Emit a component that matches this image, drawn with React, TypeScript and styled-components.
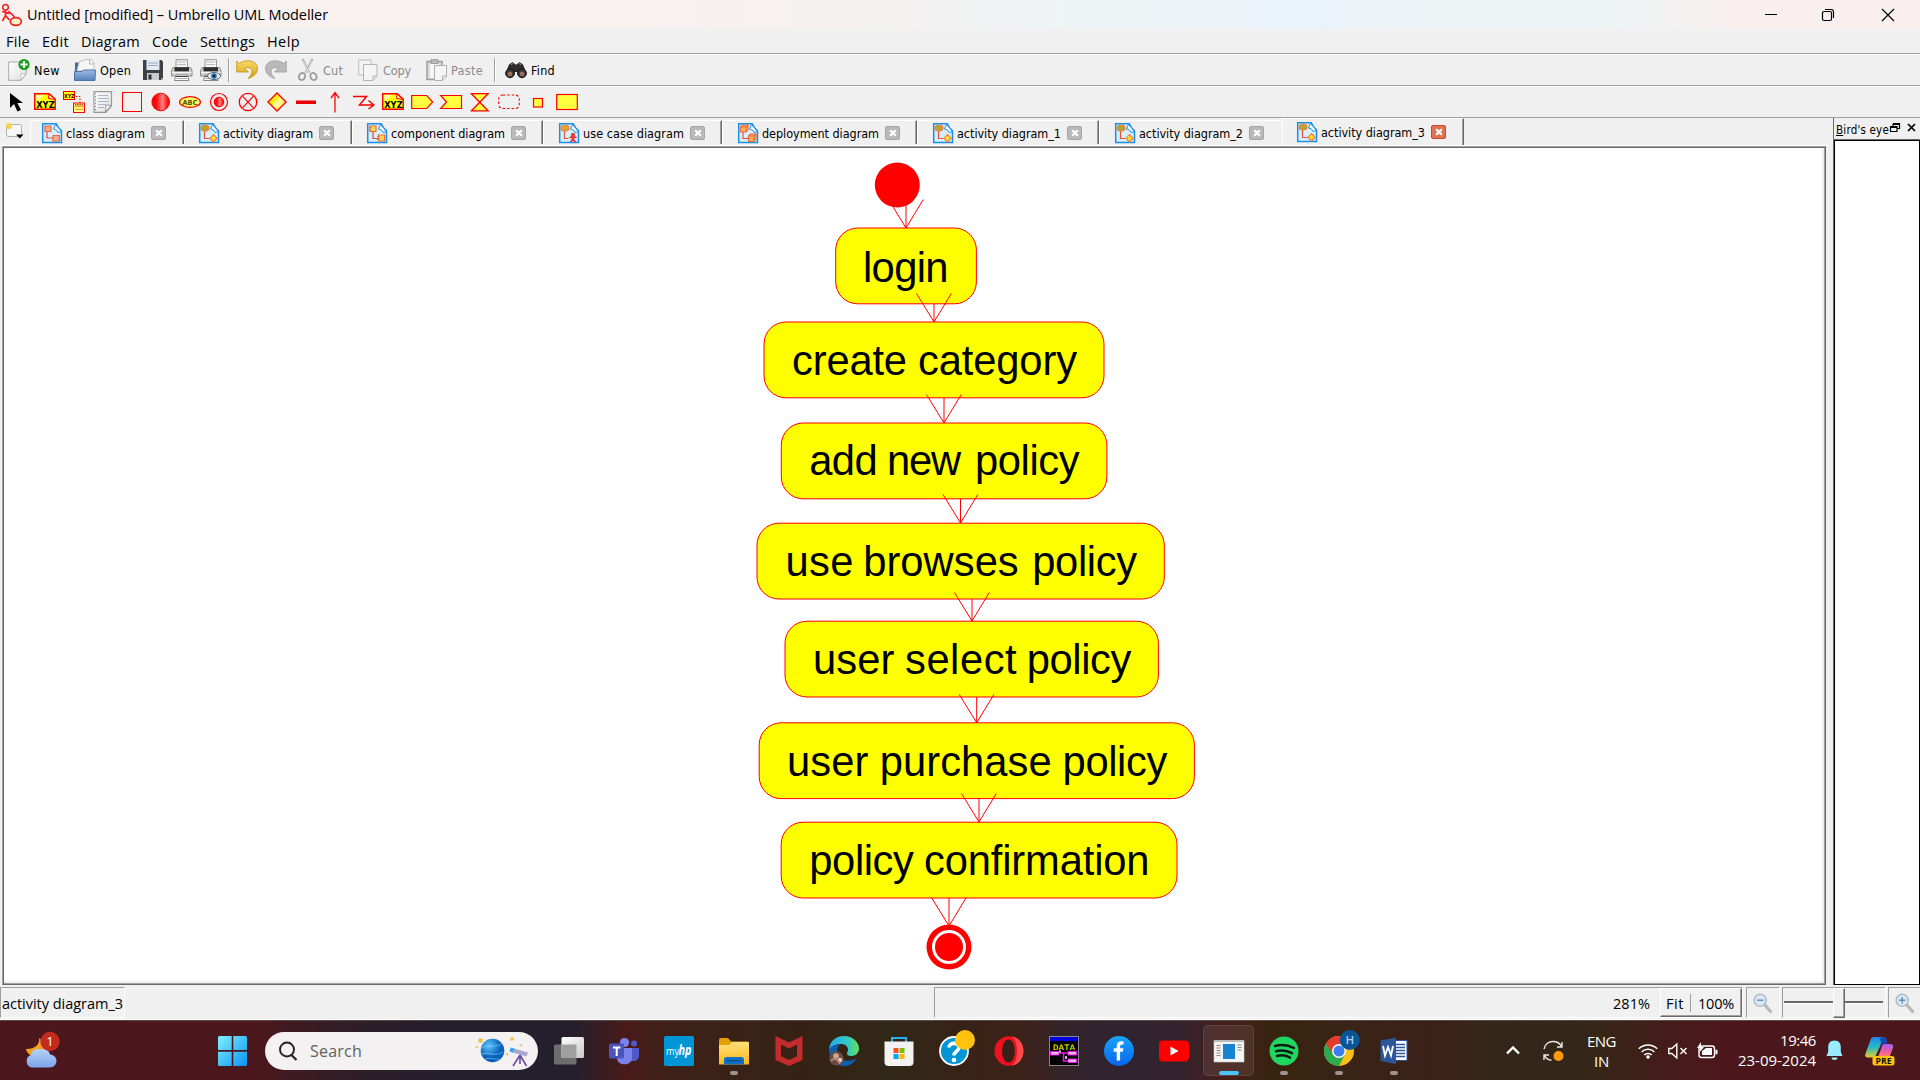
import React, { useLayoutEffect, useRef, useState } from "react";
import styled, { createGlobalStyle, css } from "styled-components";

const ui = `"Open Sans", "Noto Sans", sans-serif`;
const tahoma = `"DejaVu Sans Condensed", "DejaVu Sans", sans-serif`;

const Global = createGlobalStyle`
  * { box-sizing: border-box; }
  body { margin: 0; background: #f0f0f0; overflow: hidden; }
`;

/* ---------- text set to a known measure ---------- */
const Line = styled.span<{ $size: number; $font?: string; $color?: string; $weight?: number; $mnemonic?: boolean }>`
  display: inline-block;
  white-space: pre;
  font-family: ${(p) => p.$font || ui};
  font-size: ${(p) => p.$size}px;
  font-weight: ${(p) => p.$weight || 400};
  color: ${(p) => p.$color || "#000"};
  line-height: 20px;
  ${(p) => p.$mnemonic && css`&::first-letter { text-decoration: underline; }`}
`;
const Measure = styled.span<{ $w: number }>`
  display: block;
  flex: none;
  width: ${(p) => p.$w}px;
  height: 20px;
  white-space: nowrap;
`;
type FitProps = { w: number; size: number; font?: string; color?: string; weight?: number; mnemonic?: boolean; children: string };
function Fit({ w, size, font, color, weight, mnemonic, children }: FitProps) {
  const ref = useRef<HTMLSpanElement>(null);
  const [ls, setLs] = useState(0);
  useLayoutEffect(() => {
    if (ref.current) {
      ref.current.style.letterSpacing = "0px";
      const natural = ref.current.getBoundingClientRect().width;
      const next = (w - natural) / children.length;
      ref.current.style.letterSpacing = `${next}px`;
      setLs(next);
    }
  }, [w, children]);
  return (
    <Measure $w={w}>
      <Line ref={ref} $size={size} $font={font} $color={color} $weight={weight} $mnemonic={mnemonic} style={{ letterSpacing: ls }}>
        {children}
      </Line>
    </Measure>
  );
}

/* ---------- window ---------- */
const Window = styled.div`
  width: 1920px;
  height: 1080px;
  display: flex;
  flex-direction: column;
  background: #f0f0f0;
  overflow: hidden;
`;
const TitleBar = styled.header`
  flex: none;
  height: 29px;
  display: flex;
  align-items: center;
  padding-left: 2px;
  background: linear-gradient(90deg, #f9f0f0 0, #f9f0f0 660px, #f4f1f1 900px, #edf4f5 1100px, #ebf3fb 1300px, #ecf4f7 1400px, #edf4f5 1600px, #f9efef 1740px, #f9efef 100%);
`;
const AppTitle = styled.div`
  margin: 0 auto 0 5px;
  padding-top: 1px;
`;
const Caption = styled.div`
  display: flex;
  gap: 48px;
  padding-right: 26px;
  > svg:first-child { margin-right: -3px; }
`;
const MenuBar = styled.nav`
  flex: none;
  height: 25px;
  display: flex;
  align-items: center;
  border-bottom: 1px solid #a0a0a0;
`;
const MenuItem = styled.div<{ $gap: number }>`
  margin-left: ${(p) => p.$gap}px;
  padding-top: 1px;
`;
const ToolBar = styled.div`
  flex: none;
  height: 32px;
  display: flex;
  align-items: center;
  border-top: 1px solid #fff;
  border-bottom: 1px solid #a0a0a0;
`;
const Tool = styled.div<{ $gap: number }>`
  display: flex;
  align-items: center;
  margin-left: ${(p) => p.$gap}px;
`;
const Label = styled.div<{ $gap: number }>`
  margin-left: ${(p) => p.$gap}px;
  padding-top: 2px;
`;
const ToolSep = styled.div<{ $gap: number }>`
  width: 2px;
  height: 24px;
  margin-left: ${(p) => p.$gap}px;
  background: linear-gradient(90deg, #a0a0a0 50%, #fff 50%);
`;
const Palette = styled(ToolBar)`
  gap: 7px;
  padding-left: 5px;
`;
const Main = styled.main`
  flex: none;
  height: 867px;
  display: flex;
`;
const Left = styled.section`
  width: 1829px;
  display: flex;
  flex-direction: column;
`;
const Tabs = styled.div`
  flex: none;
  height: 28px;
  display: flex;
  align-items: flex-end;
  border-bottom: 1px solid #fff;
`;
const Corner = styled.div`
  width: 30px;
  height: 26px;
  padding: 3px 0 0 4px;
`;
const Tab = styled.div<{ $active?: boolean; $pad: number; $w: number; $noEdge?: boolean }>`
  width: ${(p) => p.$w}px;
  height: ${(p) => (p.$active ? 27 : 24)}px;
  display: flex;
  align-items: center;
  padding-left: ${(p) => p.$pad}px;
  margin-bottom: ${(p) => (p.$active ? 0 : 1)}px;
  padding-bottom: ${(p) => (p.$active ? 1 : 0)}px;
  border-top: 1px solid #fff;
  border-left: 1px solid #fff;
  ${(p) =>
    !p.$noEdge &&
    css`
      border-right: 1px solid #696969;
      box-shadow: inset -1px 0 #a0a0a0;
    `}
`;
const TabText = styled.div`
  margin: 0 6px 0 4px;
  padding-top: 2px;
`;
const CloseBox = styled.div<{ $hot?: boolean }>`
  width: 15px;
  height: 14px;
  margin-top: ${(p) => (p.$hot ? 0 : 1)}px;
  border: 1px solid ${(p) => (p.$hot ? "#d8422a" : "#a5a5a5")};
  border-radius: 2px;
  background: ${(p) => (p.$hot ? "#df7452" : "#b9b9b9")};
  display: flex;
  align-items: center;
  justify-content: center;
`;
const Canvas = styled.div`
  width: 1824px;
  height: 839px;
  margin-left: 2px;
  background: #fff;
  border: 1px solid #a0a0a0;
  border-right-color: #696969;
  border-bottom-color: #696969;
  box-shadow: inset 1px 1px #696969, inset -1px -1px #a0a0a0, inset -3px -3px #f0f0f0;
  > svg { display: block; }
`;
const Dock = styled.aside`
  width: 87px;
  margin-left: 4px;
  display: flex;
  flex-direction: column;
  border-left: 1px solid #696969;
`;
const DockTitle = styled.div`
  flex: none;
  height: 22px;
  display: flex;
  align-items: flex-start;
  padding: 0 0 0 2px;
  border-bottom: 1px solid #696969;
`;
const DockName = styled.div`
  width: 53px;
  margin-right: 1px;
  padding-top: 2px;
`;
const DockView = styled.div`
  flex: 1;
  border: 1px solid #000;
  background: #fff;
`;

/* ---------- status bar ---------- */
const Status = styled.footer`
  flex: none;
  height: 35px;
  display: flex;
  align-items: center;
  padding-top: 1px;
  border-bottom: 1px solid #fff;
`;
const Sunken = styled.div<{ $w: number; $gap?: number }>`
  flex: none;
  width: ${(p) => p.$w}px;
  height: 31px;
  margin-left: ${(p) => p.$gap || 0}px;
  display: flex;
  align-items: center;
  border: 1px solid #a0a0a0;
  border-right-color: #fff;
  border-bottom-color: #fff;
`;
const StatusText = styled.div`
  padding-top: 2px;
`;
const Raised = styled.div`
  width: 83px;
  height: 29px;
  margin-left: auto;
  display: flex;
  align-items: center;
  padding-left: 5px;
  border: 1px solid #fff;
  border-right-color: #696969;
  border-bottom-color: #696969;
  box-shadow: inset -1px -1px #a0a0a0;
`;
const Divider = styled.div`
  width: 1px;
  height: 18px;
  margin: 0 7px 0 6px;
  background: #a0a0a0;
`;
const ZoomValue = styled(StatusText)`
  margin: 0 10px 0 678px;
`;
const Groove = styled.div`
  width: 99px;
  height: 3px;
  margin-left: 1px;
  background: linear-gradient(#696969 67%, #fff 67%);
  display: flex;
  align-items: center;
`;
const Handle = styled.div`
  flex: none;
  width: 12px;
  height: 30px;
  margin-left: 49px;
  background: #f0f0f0;
  border: 1px solid #fff;
  border-right-color: #696969;
  border-bottom-color: #696969;
  box-shadow: inset -1px -1px #a0a0a0;
`;

/* ---------- task bar ---------- */
const TaskBar = styled.div`
  flex: none;
  height: 60px;
  display: flex;
  align-items: center;
  border-top: 1px solid #5b4a48;
  padding-left: 24px;
  background: linear-gradient(90deg, #4b171c 0, #4b171c 260px, #3a1c24 310px, #2c1e29 370px, #231f2d 460px, #251f2d 575px, #4a1a18 625px, #3d2017 670px, #362215 800px, #302717 890px, #3a2116 980px, #3c2119 1020px, #33232b 1070px, #2f2330 1120px, #33232e 1180px, #462019 1225px, #38230f 1270px, #382414 1330px, #3b2017 1430px, #33271a 1510px, #352616 1600px, #431d19 1660px, #4b171c 1720px, #4b171c 100%);
`;
const Spacer = styled.div<{ $w: number }>`
  flex: none;
  width: ${(p) => p.$w}px;
`;
const Search = styled.div`
  flex: none;
  width: 273px;
  height: 38px;
  border-radius: 19px;
  background: #f3f1f2;
  display: flex;
  align-items: center;
  padding-left: 13px;
  > svg:last-child { margin-left: auto; margin-right: 9px; }
  > svg:first-child { margin-right: 12px; }
`;
const Cell = styled.div<{ $active?: boolean }>`
  flex: none;
  position: relative;
  width: 51px;
  height: 51px;
  margin: 0 2px;
  display: flex;
  align-items: center;
  justify-content: center;
  border-radius: 5px;
  ${(p) => p.$active && css`background: rgba(255, 255, 255, 0.08); border: 1px solid rgba(255, 255, 255, 0.09);`}
`;
const Mark = styled.i<{ $active?: boolean }>`
  position: absolute;
  bottom: ${(p) => (p.$active ? 0 : 1)}px;
  left: 50%;
  width: ${(p) => (p.$active ? 20 : 8)}px;
  height: 4px;
  transform: translateX(-50%);
  border-radius: 2px;
  background: ${(p) => (p.$active ? "#4cc2ff" : "#9d9490")};
`;
const Tray = styled.div`
  margin-left: auto;
  display: flex;
  align-items: center;
  height: 100%;
  > svg { flex: none; }
`;
const Stack = styled.div<{ $end?: boolean }>`
  display: flex;
  flex-direction: column;
  align-items: ${(p) => (p.$end ? "flex-end" : "center")};
  margin-top: ${(p) => (p.$end ? -2 : 0)}px;
`;

/* ---------- icons ---------- */
const G = ({ w = 22, h = 22, vb, children }: { w?: number; h?: number; vb?: string; children: React.ReactNode }) => (
  <svg width={w} height={h} viewBox={vb || `0 0 ${w} ${h}`} fill="none" overflow="visible">
    {children}
  </svg>
);
const red = "#ff0000";
const Defs = () => (
  <svg width="0" height="0" style={{ position: "absolute" }}>
    <defs>
      <linearGradient id="redball" x1="0" x2="1"><stop offset="0" stopColor="#f00" /><stop offset=".25" stopColor="#ff0808" /><stop offset=".6" stopColor="#ff8080" /><stop offset=".9" stopColor="#ff1010" /><stop offset="1" stopColor="#f00" /></linearGradient>
      <linearGradient id="yel" x1="0" x2="1" y2="1"><stop offset="0" stopColor="#ff0" /><stop offset=".4" stopColor="#ffee20" /><stop offset=".55" stopColor="#ffffa8" /><stop offset="1" stopColor="#ffe600" /></linearGradient>
      <linearGradient id="paper" x1="0" x2="1" y2="1"><stop offset="0" stopColor="#fff" /><stop offset="1" stopColor="#dedede" /></linearGradient>
      <linearGradient id="folder" x2="0" y2="1"><stop offset="0" stopColor="#9dbbe0" /><stop offset="1" stopColor="#5583bd" /></linearGradient>
      <linearGradient id="win" x1="0" y1="0" x2="1" y2="1"><stop offset="0" stopColor="#7ff0ff" /><stop offset="1" stopColor="#0a93f5" /></linearGradient>
      <linearGradient id="cloud" x2="0" y2="1"><stop offset="0" stopColor="#b6d0f8" /><stop offset="1" stopColor="#7ba5ea" /></linearGradient>
      <linearGradient id="xfold" x2="0" y2="1"><stop offset="0" stopColor="#ffe07a" /><stop offset="1" stopColor="#fbb91b" /></linearGradient>
      <linearGradient id="edge" x1="0" x2="1"><stop offset="0" stopColor="#27a7e6" /><stop offset=".6" stopColor="#30c9c9" /><stop offset="1" stopColor="#63e05a" /></linearGradient>
      <linearGradient id="fb" x2="0" y2="1"><stop offset="0" stopColor="#19a4fb" /><stop offset="1" stopColor="#0866ea" /></linearGradient>
      <linearGradient id="cop" x2="0" y2="1"><stop offset="0" stopColor="#1c86ee" /><stop offset=".5" stopColor="#27b8c4" /><stop offset="1" stopColor="#e6d029" /></linearGradient>
      <linearGradient id="cop2" x2="0" y2="1"><stop offset="0" stopColor="#a55cf5" /><stop offset=".6" stopColor="#ee5ba0" /><stop offset="1" stopColor="#ff8a5c" /></linearGradient>
      <linearGradient id="undo" x2="0" y2="1"><stop offset="0" stopColor="#f7d96a" /><stop offset="1" stopColor="#d9a012" /></linearGradient>
      <linearGradient id="lid" x1="0" x2="1" y2="1"><stop offset="0" stopColor="#fff" /><stop offset="1" stopColor="#c9c9c9" /></linearGradient>
      <radialGradient id="planet" cx=".35" cy=".3"><stop offset="0" stopColor="#5cc4ff" /><stop offset="1" stopColor="#0760b8" /></radialGradient>
    </defs>
  </svg>
);

const Arrow = () => <G><path d="M5 2v15l4-4 3.500 7.500 3.500-1.500-3.700-7H18z" fill="#000" /></G>;
const Xyz = () => (
  <G>
    <path d="M.7 18.300V2.700h14.500l6 5.300v10.300z" fill="#ff0" stroke={red} strokeWidth="1.400" />
    <path d="M15 3l-.5 4.500 6.500 1z" fill="#ff9" stroke={red} />
    <path d="M2 4h8L3 11z" fill="#ffffb0" />
    <text x="2.200" y="17" fontFamily="DejaVu Sans" fontWeight="700" fontSize="8" textLength="18.500" lengthAdjust="spacingAndGlyphs" fill="#000">XYZ</text>
  </G>
);
const Assoc = () => (
  <G>
    <rect x=".5" y=".5" width="11" height="8" fill="#ff0" stroke={red} />
    <text x="1" y="7" fontFamily="DejaVu Sans" fontWeight="700" fontSize="5.500" textLength="10.500" lengthAdjust="spacingAndGlyphs" fill="#300">XYZ</text>
    <path d="M13 5.500h4V12" stroke={red} strokeDasharray="1.500 1.500" />
    <rect x="10.500" y="12" width="11" height="9.500" fill="#ffff8c" stroke={red} />
    <path d="M10.500 15.300h11M12 18.300h8" stroke="#f80" />
    <path d="M12 13.800h8" stroke="#900" strokeDasharray="1.500 .7" />
  </G>
);
const Note = () => (
  <G>
    <path d="M2 .7h17.500v14l-5.500 6.600H2z" fill="url(#paper)" stroke="#999" strokeWidth="1.200" />
    <path d="M6 4.500h10M6 7.500h11M6 10.500h11M6 13.500h8M6 16.500h6" stroke="#a9b8cc" />
    <path d="M3.500 2v18" stroke="#888" strokeDasharray="1.200 2" />
    <path d="M19 14.500l-5-.5-.5 7z" fill="#fff" stroke="#999" />
  </G>
);
const CloseX = () => <G w={10} h={10}><path d="M2.200 2.200l5.600 5.600M7.800 2.200L2.200 7.800" stroke="#fff" strokeWidth="2.200" /></G>;

const palette: React.ReactNode[] = [
  <Arrow />, <Xyz />, <Assoc />, <Note />,
  <G><rect x="1.500" y="1.500" width="19" height="19" stroke={red} fill="#f5f0f0" /></G>,
  <G><circle cx="10.700" cy="11" r="8.800" fill="url(#redball)" stroke={red} /></G>,
  <G><ellipse cx="11" cy="11" rx="10.400" ry="5.400" fill="#ff6" stroke={red} strokeWidth="1.200" /><text x="3.500" y="13.700" fontFamily="DejaVu Sans" fontWeight="700" fontSize="7" textLength="15" lengthAdjust="spacingAndGlyphs" fill="#550">ABC</text></G>,
  <G><circle cx="11" cy="11" r="8.500" stroke={red} strokeWidth="1.200" /><circle cx="11" cy="11" r="4.800" fill="url(#redball)" stroke={red} /></G>,
  <G><circle cx="11" cy="11" r="8.700" stroke={red} strokeWidth="1.300" /><path d="M5.500 5.200l11 11.600M16.500 5.200l-11 11.600" stroke={red} strokeWidth="1.200" /></G>,
  <G><path d="M11 2l9 9-9 9-9-9z" fill="url(#yel)" stroke={red} strokeWidth="1.400" /></G>,
  <G><rect x="1" y="9.500" width="20" height="3.500" fill="#e80000" /></G>,
  <G><path d="M11 21.500V1.500M7 7l4-5.500L15 7" stroke={red} strokeWidth="1.300" /></G>,
  <G><path d="M0 5.500h13.500L6.500 14H20M15.500 9.500L20.800 14l-5.300 4" stroke={red} strokeWidth="1.500" /></G>,
  <Xyz />,
  <G><path d="M.7 4.500h15l6 6.500-6 6.500H.7z" fill="#ffff40" stroke={red} strokeWidth="1.200" /></G>,
  <G><path d="M.7 4.500h20.800v13H.7L6.500 11z" fill="#ffff40" stroke={red} strokeWidth="1.200" /></G>,
  <G><path d="M2.500 2.700h17L11 11z" fill="#ff4" /><path d="M11 11l8.500 8.800h-17z" fill="#ff4" /><path d="M1.500 2.700h18.500M1.500 19.800h18.500M2.500 2.700L19 19.800M19 2.700L2.500 19.800" stroke={red} strokeWidth="1.300" /></G>,
  <G><rect x=".7" y="4" width="20.600" height="13.500" rx="4" stroke={red} strokeWidth="1.100" strokeDasharray="2.500 2" /></G>,
  <G><rect x="6.500" y="7.500" width="9" height="8.500" fill="#ffff40" stroke={red} strokeWidth="1.200" /></G>,
  <G><rect x=".7" y="3.500" width="20.600" height="15" fill="#ffff40" stroke={red} strokeWidth="1.200" /></G>,
];

const NewIcon = () => (
  <G>
    <path d="M.7 3h17.500v12l-5 6.300H.7z" fill="url(#paper)" stroke="#aaa" /><path d="M18 15l-5-.3-.3 6.500z" fill="#fff" stroke="#aaa" strokeWidth=".7" />
    <circle cx="16" cy="5.500" r="5.600" fill="#16a016" /><path d="M16 2v7M12.500 5.500h7" stroke="#fff" strokeWidth="2.200" />
  </G>
);
const OpenIcon = () => (
  <G>
    <path d="M1 3.500h6l1.500 2H19V21H1z" fill="#466c9f" /><path d="M3 11l2-8 7-2.500h5L20 4v8H3z" fill="#f6f6f6" stroke="#aaa" strokeWidth=".7" /><path d="M15.500 1v4H20" stroke="#aaa" strokeWidth=".8" />
    <path d="M.5 12.500H8l1.500-1.500h12l-.5 10.500H.5z" fill="url(#folder)" stroke="#4a75ab" />
  </G>
);
const SaveIcon = () => (
  <G w={20}>
    <path d="M0 1h18.500L20 2.500V21H0z" fill="#3d4045" /><path d="M3.500 1h13v10h-13z" fill="#e2ebf5" /><path d="M5 4h10M5 6.500h10" stroke="#9ab" /><path d="M4 14h12v7H4z" fill="#c8ccd0" /><path d="M5.500 15.500h3v5h-3z" fill="#333" /><path d="M18 20h2" stroke="#fff" />
  </G>
);
const PrintBase = () => (
  <>
    <path d="M5 .7h11.500v8H5z" fill="#f5f5f5" stroke="#999" /><path d="M6.500 3h8.500M6.500 5.500h8.500" stroke="#bbb" />
    <path d="M2 8.500h17.500l1.500 3v5.500H.5v-5.500z" fill="#cfcfcf" stroke="#8a8a8a" /><path d="M3.500 8.300h14.500v4H3.500z" fill="#2d2d2d" /><path d="M1 13.500h19.500" stroke="#f4f4f4" />
    <path d="M5 16h11.500l1.500 5.500H3.500z" fill="#fff" stroke="#888" /><path d="M5 17.500h11.500" stroke="#444" /><path d="M5.500 19.500h10.500" stroke="#aaa" />
  </>
);
const UndoIcon = ({ gray }: { gray?: boolean }) => (
  <G w={22} h={20}>
    <g transform={gray ? "translate(22 0) scale(-1 1)" : undefined}>
      <path d="M.7 1l2.500 2.500C9-1 20.500-.5 21.500 8c.3 5-3.500 8.700-9.500 10.500 4-4 5-8 2.500-10-1.700-1.300-4-1-5.500 0L12.500 12H.7z" fill={gray ? "#b9b9b9" : "url(#undo)"} stroke={gray ? "#a0a0a0" : "#c59010"} strokeWidth=".8" />
    </g>
  </G>
);
const CutIcon = () => (
  <G w={20}>
    <path d="M4.500 0l7 14M14.500 0l-7 14" stroke="#b5b5b5" strokeWidth="2.400" /><path d="M5 2l6 12M14 2L8 14" stroke="#e8e8e8" strokeWidth=".8" />
    <ellipse cx="4" cy="17.500" rx="3" ry="3.600" stroke="#9a9a9a" strokeWidth="1.800" transform="rotate(25 4 17.500)" /><ellipse cx="15.500" cy="17.500" rx="3" ry="3.600" stroke="#9a9a9a" strokeWidth="1.800" transform="rotate(-25 15.500 17.500)" />
  </G>
);
const CopyIcon = () => (
  <G w={20}><path d="M.7 1h12.500v15H.7z" fill="#f3f3f3" stroke="#bdbdbd" /><path d="M5.500 5.500H19V17l-4 4.500H5.500z" fill="#f5f5f5" stroke="#b5b5b5" /><path d="M19 17h-4v4.500" stroke="#b5b5b5" /></G>
);
const PasteIcon = () => (
  <G w={21}><path d="M1 2.500h15v18H1z" fill="#dcdcdc" stroke="#9c9c9c" strokeWidth="1.500" /><path d="M5 .7h7v4H5z" fill="#bbb" stroke="#999" /><path d="M4 5h9v14H4z" fill="#f5f5f5" /><path d="M8.500 6.500H20.500V17l-4 4.500h-8z" fill="#f5f5f5" stroke="#b0b0b0" /><path d="M20.500 17h-4v4.500" stroke="#b0b0b0" /></G>
);
const FindIcon = () => (
  <G w={22} h={18}>
    <path d="M4 3.500L7.500 1l3 2.500h1L14.500 1 18 3.500l3.500 8.500-9 2v-3h-3v3L.5 12z" fill="#2e2c2c" />
    <circle cx="5" cy="12.300" r="4.400" fill="#3c3a3a" stroke="#111" /><circle cx="17" cy="12.300" r="4.400" fill="#3c3a3a" stroke="#111" /><circle cx="5" cy="13" r="2.200" fill="#a4705a" /><circle cx="17" cy="13" r="2.200" fill="#a4705a" /><path d="M6 3.500l2-1M14 2.500l2 1" stroke="#999" />
  </G>
);

const DocBase = () => <path d="M.7.700h13.500l2.300 4 3 3v11.800H.7z" fill="#d5effc" stroke="#1b8fe8" strokeWidth="1.500" />;
const Bite = () => <path d="M13.500 1.500l-2 4.500 3 1 1.500 2.500 3.500-1z" fill="#fff" stroke="#1b8fe8" />;
function DocIcon({ kind }: { kind: string }) {
  const o = "#ee6a3c";
  return (
    <G w={20} h={20}>
      <DocBase />
      <Bite />
      {kind === "class" && <g fill="#f7ab8e" stroke={o} strokeWidth="1.200"><path d="M3 3h6v5.500H3z" /><path d="M11 12.500h6.500V18H11z" /><path d="M5 8.500V15h6" fill="none" stroke="#e4483c" /></g>}
      {kind === "activity" && <g stroke="#e8503c" strokeWidth="1.200"><path d="M5.500 8v7.500h5" /><ellipse cx="6" cy="5" rx="4" ry="3" fill="#b5a63a" stroke="#f08030" /><path d="M14.500 11.500l3.500 3.700-3.500 3.800-3.500-3.800z" fill="#ffe13a" stroke="#f0803a" /></g>}
      {kind === "component" && <g stroke={o} strokeWidth="1.200" fill="#ffd95c"><path d="M3 3h6v5.500H3z" /><path d="M11.500 12h6v6h-6z" /><path d="M6 8.500v7h5" fill="none" stroke="#e4483c" /><path d="M1.800 4.500h2.500M1.800 7h2.500M10 13.500h2.500M10 16.500h2.500" /></g>}
      {kind === "usecase" && <g stroke="#e8503c" strokeWidth="1.200"><path d="M5.500 8v7.500h4" /><ellipse cx="6" cy="5" rx="4" ry="3" fill="#e4a33a" stroke="#f08030" /><circle cx="14" cy="12" r="1.700" fill="#e8302c" /><path d="M14 13v3M10.500 14.300h7M14 16l-2.500 3M14 16l2.500 3" stroke="#e8302c" strokeWidth="1.700" /></g>}
      {kind === "deploy" && <g stroke={o} strokeWidth="1.100" fill="#ffb35c"><path d="M2.500 4l2-2H10v5l-2 2H2.500zM2.500 4H8v5M8 4l2-2" /><path d="M10.500 13l2-2H18v5l-2 2.500h-5.500zM10.500 13H16v5.500M16 13l2-2" /><path d="M5 9v6.500h5.500" fill="none" stroke="#e4483c" /></g>}
    </G>
  );
}

const Magnifier = ({ plus }: { plus?: boolean }) => (
  <G w={19} h={20}>
    <path d="M11.500 11.500l6 7" stroke="#b9b9b9" strokeWidth="3.400" strokeLinecap="round" />
    <circle cx="7.200" cy="7.200" r="6" fill="#dbe8f5" stroke="#b0bcc8" strokeWidth="1.600" />
    <path d="M4 7.200h6.400" stroke="#5d8ab8" strokeWidth="1.400" />
    {plus && <path d="M7.200 4v6.400" stroke="#5d8ab8" strokeWidth="1.400" />}
  </G>
);

/* ---------- diagram ---------- */
type Word = [string, number, number];
const nodes: { x: number; y: number; w: number; base: number; words: Word[] }[] = [
  { x: 835.7, y: 228, w: 140.700, base: 282, words: [["login", 863, 85.5]] },
  { x: 764, y: 322, w: 340, base: 374.800, words: [["create", 792, 115], ["category", 918, 159]] },
  { x: 781.3, y: 423, w: 325.600, base: 475.400, words: [["add", 809.2, 68.500], ["new", 887, 74.200], ["policy", 975, 104.600]] },
  { x: 757, y: 523.2, w: 407.3, base: 575.5, words: [["use", 785.5, 68], ["browses", 863.2, 155.500], ["policy", 1032.3, 104.700]] },
  { x: 785, y: 621.200, w: 373.4, base: 673.8, words: [["user", 813, 81.300], ["select", 905, 111.600], ["policy", 1026.8, 104.500]] },
  { x: 759.2, y: 722.8, w: 435.2, base: 775.5, words: [["user", 787, 81.500], ["purchase", 879.8, 171.800], ["policy", 1062.6, 104.700]] },
  { x: 781.2, y: 822.2, w: 395.8, base: 874.5, words: [["policy", 809.3, 104.600], ["confirmation", 924, 225.500]] },
];
const arrows = [
  [906, 205, 228], [934, 304, 322], [944, 398, 423], [960.5, 499, 523], [972, 599, 621], [976.7, 697, 722.8], [979, 798.6, 822], [949, 898, 926],
];
const Diagram = () => (
  <svg width="1819" height="833" viewBox="3 147 1819 833">
    {arrows.slice(0, 1).map(([x, , t]) => <path key="a" d={`M${x - 17.5} ${t - 28.5}L${x} ${t}`} stroke={red} fill="none" />)}
    {nodes.map((n) => (
      <g key={n.base}>
        <rect x={n.x} y={n.y} width={n.w} height={75.800} rx="22" fill="#ffff00" stroke={red} />
        <g fontFamily="'Liberation Sans', Arial, sans-serif" fontSize="41.700" fill="#000">
          {n.words.map(([t, x, w], i) => <text key={i} x={x} y={n.base} textLength={w}>{t}</text>)}
        </g>
      </g>
    ))}
    <circle cx="897.300" cy="185" r="22.500" fill={red} />
    {arrows.map(([x, s, t], i) => (
      <path key={t} d={`M${x} ${s}V${t}${i ? `M${x - 17.5} ${t - 28.5}` : `M${x} ${t}`}L${x} ${t}L${x + 17.3} ${t - 28.5}`} stroke={red} fill="none" />
    ))}
    <circle cx="949" cy="947" r="22.500" fill={red} />
    <circle cx="949" cy="947" r="15.500" fill={red} stroke="#fff" strokeWidth="3" />
  </svg>
);

/* ---------- task bar icons ---------- */
const I = ({ children }: { children: React.ReactNode }) => <G w={30} h={30}>{children}</G>;
const taskIcons: { mark?: boolean; active?: boolean; icon: React.ReactNode }[] = [
  { icon: <I><rect x="0" y="8.500" width="22.500" height="20" rx="1.500" fill="#6d6d6d" /><rect x="7.500" y="1" width="22.500" height="21" rx="1.500" fill="url(#lid)" /><path d="M7.500 8.500h15V22h-15z" fill="#a0a0a0" /></I> },
  { icon: <I><circle cx="15.500" cy="6.500" r="4.600" fill="#7b83eb" /><circle cx="25" cy="7.500" r="3" fill="#5059c9" /><path d="M20 12h10v8c0 3-2.500 5-5 5h-4z" fill="#5059c9" /><path d="M8 12h15v10c0 4-3.500 6.300-7.500 6.300S8 26 8 22z" fill="#7b83eb" /><rect x="0" y="7.500" width="15" height="15" rx="1.500" fill="#4b53bc" /><path d="M4 11.500h7.500M7.700 11.500V20" stroke="#fff" strokeWidth="2" /></I> },
  { icon: <I><rect width="30" height="30" rx="1.500" fill="#0096d6" /><text x="2" y="18.500" fontFamily="Open Sans" fontSize="10.500" fill="#fff" textLength="13" lengthAdjust="spacingAndGlyphs">my</text><text x="14.500" y="19" fontFamily="Open Sans" fontStyle="italic" fontWeight="700" fontSize="14" textLength="13" lengthAdjust="spacingAndGlyphs" fill="#fff">hp</text></I> },
  { mark: true, icon: <I><path d="M0 4a2 2 0 012-2h7l3 3.500H28a2 2 0 012 2V28H0z" fill="#e0a000" /><path d="M0 9h10l3-3h17v22.500H0z" fill="url(#xfold)" /><path d="M5 28.500v-5a2.500 2.500 0 012.500-2.500h15a2.500 2.500 0 012.500 2.500v5z" fill="#1070c8" /><path d="M8 24.700h14" stroke="#0a4a90" strokeWidth="1.300" /></I> },
  { icon: <I><path d="M1.500 0L15 6.500 28.500 0v24L15 30 1.500 24zM7 8.500v11.800l8 3.700 8-3.700V8.500l-8 4z" fill="#c32b2c" fillRule="evenodd" /></I> },
  { icon: <I><path d="M0 14C0 6 6.500 0 15 0s15 6 15 12.500c0 5-4 7.500-8 7.500-3 0-4-1-4-2.500 0-1 1-2 1-4 0-3-2.500-5.500-7-5.500-6 0-10.500 3-12 6z" fill="url(#edge)" /><path d="M0 14c1.500-4 7-5.500 10.500-5.500-4 4-3 11.500 2 14.500 5 3 11 2 15-1-3 6-7.500 8-12.500 8C6.500 30 0 23.500 0 14z" fill="#0c5eb0" /><circle cx="7.500" cy="22.500" r="7.200" fill="#6b4a42" /><circle cx="7" cy="20" r="2.800" fill="#d6a78e" /><circle cx="11" cy="24" r="2.200" fill="#e2cfc6" /><path d="M2 25c3-4 7-2 9 3" stroke="#b98a76" strokeWidth="1.800" /></I> },
  { icon: <I><path d="M8 7V2h14v5" stroke="#27aef0" strokeWidth="2" /><path d="M.5 5.500h29V26a4 4 0 01-4 4h-21a4 4 0 01-4-4z" fill="#f2f2f2" /><path d="M9.500 12h5v5h-5z" fill="#f25022" /><path d="M15.500 12h5v5h-5z" fill="#7fba00" /><path d="M9.500 18h5v5h-5z" fill="#00a4ef" /><path d="M15.500 18h5v5h-5z" fill="#ffb900" /></I> },
  { icon: <I><circle cx="15" cy="15" r="14" fill="#0096d6" stroke="#fff" strokeWidth="1.800" /><path d="M10 11.500C10 6 20 6 20 11.500c0 3.500-5 4-5 8" stroke="#fff" strokeWidth="3.600" /><circle cx="15" cy="24" r="2.300" fill="#fff" /><circle cx="26" cy="4" r="10" fill="#ffc20e" /></I> },
  { icon: <I><ellipse cx="15" cy="15" rx="14.500" ry="14.700" fill="#f0101f" /><path d="M17 .5c7 0 12.500 6.500 12.500 14.500S24 29.500 17 29.500c4-1 6-7 6-14.500S21 1.500 17 .5z" fill="#ff4a4a" /><ellipse cx="14.500" cy="15" rx="6.500" ry="11.500" fill="#3a2118" /></I> },
  { icon: <I><rect x=".5" y=".5" width="29" height="29" fill="#000" stroke="#888" /><rect x="1" y="1" width="27" height="4" fill="#0000e8" /><text x="4" y="13.500" fontFamily="DejaVu Sans Mono" fontSize="7.500" fill="#ff0" textLength="22" lengthAdjust="spacingAndGlyphs">DATA</text><path d="M10 17h9M14.500 17v8H19" stroke="#e020e0" strokeWidth="1.500" /><g fill="#ccc" stroke="#f0f"><path d="M1.500 15.500H10V19H1.500zM19 15.500h8.500V19H19zM19 23h8.500v3.500H19z" /></g><path d="M11 14.500v2M17 20v3" stroke="#fff" strokeWidth="1.500" /></I> },
  { icon: <I><circle cx="15" cy="15" r="15" fill="url(#fb)" /><path d="M12.700 24.500v-8.700h-3v-3.600h3V10c0-3.300 1.800-4.800 4.500-4.800 1.200 0 2.300.2 2.300.2v3h-1.500c-1.400 0-1.900.8-1.900 1.900v1.900h3.300l-.6 3.600h-2.700v8.700z" fill="#fff" /></I> },
  { icon: <I><rect y="4.500" width="30" height="21" rx="4" fill="#f00" /><path d="M11.500 10.500v9l8-4.500z" fill="#fff" /></I> },
  { active: true, mark: true, icon: <I><path d="M0 4.500h30v21.500H0z" fill="#f4f4f4" stroke="#ccc" strokeWidth=".6" /><path d="M0 4.500h30V6H0z" fill="#bbb" /><rect x="9" y="8" width="12" height="15" fill="#1683d0" /><path d="M2.500 9.500h4M2.500 12h4M2.500 14.500h4M2.500 17h4M2.500 19.500h4M23.500 9h4M23.500 11.500h4M23.500 14h4" stroke="#888" /></I> },
  { mark: true, icon: <I><circle cx="15" cy="15" r="14.500" fill="#1ed760" /><path d="M6 10c6-1.800 13-1.200 19 2M7 15.300c5.500-1.500 11-.9 16 1.900M8 20c4.500-1.200 9-.7 13 1.600" stroke="#0c1a10" strokeWidth="2.500" strokeLinecap="round" /></I> },
  { mark: true, icon: <I><circle cx="15" cy="15" r="15" fill="#fbc116" /><path d="M15 15L2 7.500A15 15 0 0128 7.500L15 8z" fill="#e33b2e" /><path d="M2 7.500A15 15 0 0015 30l6-11.500L15 15z" fill="#2da94f" /><path d="M2 7.500L9 18l6-10h13A15 15 0 002 7.500z" fill="#e33b2e" /><circle cx="15" cy="15" r="7" fill="#fff" /><circle cx="15" cy="15" r="5.500" fill="#3b7ded" /><circle cx="25.800" cy="4" r="10" fill="#0b5596" /><text x="21.500" y="8.200" fontFamily="Open Sans" fontSize="11.500" fontWeight="600" fill="#a8d0f5">H</text></I> },
  { mark: true, icon: <I><rect x="12" y="4.500" width="16" height="20" fill="#fff" stroke="#2b579a" /><path d="M17 8.500h9M17 11.500h9M17 14.500h9M17 17.500h9M17 20.500h9" stroke="#2b579a" strokeWidth="1.400" /><path d="M1.500 4.500L17 1.500v26.500L1.500 25z" fill="#2b579a" /><path d="M4 10l2 9.500L9 11l3 8.500L14 10" stroke="#fff" strokeWidth="1.900" /></I> },
];

const tabs = [
  { k: "class", t: "class diagram", pad: 11, tw: 79, w: 154 },
  { k: "activity", t: "activity diagram", pad: 14, tw: 90, w: 168 },
  { k: "component", t: "component diagram", pad: 14, tw: 114, w: 191 },
  { k: "usecase", t: "use case diagram", pad: 15, tw: 101, w: 179 },
  { k: "deploy", t: "deployment diagram", pad: 15, tw: 117, w: 195 },
  { k: "activity", t: "activity diagram_1", pad: 15, tw: 104, w: 182 },
  { k: "activity", t: "activity diagram_2", pad: 15, tw: 104, w: 183 },
  { k: "activity", t: "activity diagram_3", pad: 14, tw: 104, w: 182 },
];
const menus: [string, number, number][] = [["File", 6, 24], ["Edit", 12, 27], ["Diagram", 12, 59], ["Code", 12, 36], ["Settings", 12, 55], ["Help", 12, 33]];

export default function App() {
  return (
    <Window>
      <Global />
      <Defs />
      <TitleBar>
        <G w={20} h={24}>
          <path d="M3.500 7v5.500M0 8.500l8 2M3.500 12.500L.5 18M3.500 12.500l4 4.500M6.500 8l6 6" stroke="#f12222" strokeWidth="1.700" />
          <circle cx="3.500" cy="4.200" r="2.800" stroke="#f12222" strokeWidth="1.500" />
          <ellipse cx="13.800" cy="18.500" rx="5.500" ry="3.800" fill="#fdf3c4" stroke="#f12222" strokeWidth="1.700" />
        </G>
        <AppTitle><Fit w={301} size={14.5}>Untitled [modified] – Umbrello UML Modeller</Fit></AppTitle>
        <Caption>
          <G w={12} h={12}><path d="M0 5.500h12" stroke="#000" /></G>
          <G w={12} h={12}><rect x=".5" y="2.500" width="9" height="9" rx="1.500" stroke="#000" strokeWidth="1.200" /><path d="M3 .5h6a2.500 2.500 0 012.500 2.500v6" stroke="#000" strokeWidth="1.200" /></G>
          <G w={12} h={12}><path d="M0 0l12 12M12 0L0 12" stroke="#000" strokeWidth="1.200" /></G>
        </Caption>
      </TitleBar>
      <MenuBar>
        {menus.map(([t, g, w]) => <MenuItem key={t} $gap={g}><Fit w={w} size={14.5}>{t}</Fit></MenuItem>)}
      </MenuBar>
      <ToolBar>
        <Tool $gap={8}><NewIcon /><Label $gap={4}><Fit w={26} size={12.5} font={tahoma}>New</Fit></Label></Tool>
        <Tool $gap={14}><OpenIcon /><Label $gap={4}><Fit w={31} size={12.5} font={tahoma}>Open</Fit></Label></Tool>
        <Tool $gap={12}><SaveIcon /></Tool>
        <Tool $gap={8}><G w={21}><PrintBase /></G></Tool>
        <Tool $gap={8}><G w={21}><PrintBase /><ellipse cx="14" cy="17" rx="6.500" ry="3.500" fill="#e6eef5" stroke="#567" /><circle cx="14" cy="17" r="2.800" fill="#2a6ea8" /><circle cx="14" cy="17" r="1.200" fill="#012" /></G></Tool>
        <ToolSep $gap={7} />
        <Tool $gap={6}><UndoIcon /></Tool>
        <Tool $gap={7}><UndoIcon gray /></Tool>
        <Tool $gap={11}><CutIcon /><Label $gap={5}><Fit w={20} size={12.5} font={tahoma} color="#8a8a8a">Cut</Fit></Label></Tool>
        <Tool $gap={15}><CopyIcon /><Label $gap={5}><Fit w={28} size={12.5} font={tahoma} color="#8a8a8a">Copy</Fit></Label></Tool>
        <Tool $gap={15}><PasteIcon /><Label $gap={4}><Fit w={32} size={12.5} font={tahoma} color="#8a8a8a">Paste</Fit></Label></Tool>
        <ToolSep $gap={11} />
        <Tool $gap={9}><FindIcon /><Label $gap={4}><Fit w={24} size={12.5} font={tahoma}>Find</Fit></Label></Tool>
      </ToolBar>
      <Palette>{palette.map((p, i) => <React.Fragment key={i}>{p}</React.Fragment>)}</Palette>
      <Main>
        <Left>
          <Tabs>
            <Corner>
              <G w={20} h={20}><rect x="2.500" y="2.500" width="15" height="12" rx="2" fill="#f7f7f7" stroke="#b0b0b0" /><circle cx="5" cy="4" r="3" fill="#f6d050" /><path d="M12 12.500h7.500l-3.700 4z" fill="#000" /></G>
            </Corner>
            {tabs.map((t, i) => (
              <Tab key={t.t} $pad={t.pad} $w={t.w} $active={i === 7} $noEdge={i === 6}>
                <DocIcon kind={t.k} />
                <TabText><Fit w={t.tw} size={12.5} font={tahoma}>{t.t}</Fit></TabText>
                <CloseBox $hot={i === 7}><CloseX /></CloseBox>
              </Tab>
            ))}
          </Tabs>
          <Canvas><Diagram /></Canvas>
        </Left>
        <Dock>
          <DockTitle>
            <DockName><Fit w={53} size={11.5} font={tahoma} mnemonic>Bird's eye</Fit></DockName>
            <G w={10} h={20}><path d="M3 5.500h6.500v5H7M3 6.500h6.500M3 6v2" stroke="#000" strokeWidth="1.200" /><path d="M.5 8.500h6.500v5H.5zM.5 9.500H7" stroke="#000" strokeWidth="1.200" /></G>
            <Spacer $w={7} />
            <G w={9} h={20}><path d="M1 6l7 7M8 6l-7 7" stroke="#000" strokeWidth="1.700" /></G>
          </DockTitle>
          <DockView />
        </Dock>
      </Main>
      <Status>
        <Sunken $w={125}><Spacer $w={1} /><StatusText><Fit w={121} size={14.5}>activity diagram_3</Fit></StatusText></Sunken>
        <Sunken $w={809} $gap={809}>
          <ZoomValue><Fit w={37} size={14.5}>281%</Fit></ZoomValue>
          <Raised><StatusText><Fit w={18} size={14.5}>Fit</Fit></StatusText><Divider /><StatusText><Fit w={36} size={14.5}>100%</Fit></StatusText></Raised>
        </Sunken>
        <Sunken $w={34} $gap={3}><Spacer $w={6} /><Magnifier /></Sunken>
        <Sunken $w={104} $gap={2}><Groove><Handle /></Groove></Sunken>
        <Sunken $w={34} $gap={2}><Spacer $w={6} /><Magnifier plus /></Sunken>
      </Status>
      <TaskBar>
        <G w={36} h={36}>
          <path d="M15 5c1 6-3 11-13 11 1 6 8 9 14 5l8-8z" fill="#f3a11f" />
          <path d="M8 34.500a6.500 6.500 0 01-1-12.500C8 17 12 15 16 16.500c4-1.500 9 0 10 5 4.500.5 6.500 3.500 6.500 6.500s-2.500 6.500-7 6.500z" fill="url(#cloud)" />
          <circle cx="26" cy="8.500" r="9.700" fill="#c42b1c" /><text x="22.200" y="13.300" fontFamily="Open Sans" fontSize="13" fill="#fff">1</text>
        </G>
        <Spacer $w={158} />
        <G w={29} h={30}><path d="M0 1.500A1.500 1.500 0 011.500 0H13.700V14H0zM15.300 0h12.200A1.500 1.500 0 0129 1.500V14H15.300zM0 15.700h13.700V30H1.500A1.500 1.500 0 010 28.500zM15.300 15.700H29v12.800a1.500 1.500 0 01-1.500 1.500H15.300z" fill="url(#win)" /></G>
        <Spacer $w={18} />
        <Search>
          <G w={20} h={20}><circle cx="9" cy="8.500" r="7" stroke="#222" strokeWidth="1.900" /><path d="M13.500 14l5 5" stroke="#222" strokeWidth="2.200" /></G>
          <Fit w={52} size={16} color="#606060">Search</Fit>
          <G w={54} h={30}>
            <circle cx="17.500" cy="14.500" r="11.800" fill="url(#planet)" />
            <path d="M6.500 12c6-4 14 1 21-5M7 18c7-2 13 3 21-2M10 23c6-2 9 1 14 0" stroke="#8fd2ff" strokeWidth="1" opacity=".6" />
            <g fill="#f0c040"><path d="M4 2l4 1-1 4-4-1zM35 2l3-1 1 3-3 1zM0 11l3-1v3zM44 9l3-1v3zM30 18l3-1v3z" /></g>
            <path d="M37 12l16 4.500-1.500 4L36 16z" fill="#a9a6cf" /><path d="M35.500 11.500l4 1-1.500 4-3.500-1z" fill="#39a5ee" /><path d="M45 19l-7 11M45 19v9M45 19l6.500 11" stroke="#6a4da0" strokeWidth="1.600" />
          </G>
        </Search>
        <Spacer $w={3} />
        {taskIcons.map((c, i) => (
          <Cell key={i} $active={c.active}>{c.icon}{c.mark && <Mark $active={c.active} />}</Cell>
        ))}
        <Tray>
          <G w={14} h={9}><path d="M1 7.500l6-6 6 6" stroke="#fff" strokeWidth="2.400" /></G>
          <Spacer $w={23} />
          <G w={21} h={22}><path d="M1 9C2 4 6 1.500 10 1.500s7 2 8.500 5M19 2v5h-5M1 20v-5h5M1.500 15.500c1.500 3 4 4.500 7 4.700" stroke="#e8e8e8" strokeWidth="1.400" /><circle cx="15.500" cy="16" r="5" fill="#ff9a0c" /></G>
          <Spacer $w={23} />
          <Stack><Fit w={29} size={15} color="#fff">ENG</Fit><Fit w={15} size={15} color="#fff">IN</Fit></Stack>
          <Spacer $w={22} />
          <G w={20} h={16}><path d="M.8 5.800a13 13 0 0118.400 0M3.600 9a9 9 0 0112.800 0M6.300 12a5.300 5.300 0 017.400 0" stroke="#fff" strokeWidth="1.500" /><circle cx="10" cy="14" r="1.800" fill="#fff" /></G>
          <Spacer $w={10} />
          <G w={20} h={16}><path d="M.8 5.500h3l5-4.500v14l-5-4.500h-3z" stroke="#fff" strokeWidth="1.400" /><path d="M12.500 5l6 6M18.500 5l-6 6" stroke="#fff" strokeWidth="1.400" /></G>
          <Spacer $w={9} />
          <G w={21} h={17}><rect x="2" y="4" width="15.500" height="11.500" rx="2.500" stroke="#fff" strokeWidth="1.400" /><path d="M18.500 7.500l2 .5v4l-2 .5z" fill="#fff" /><path d="M5 13V9l4-3h6v7z" fill="#fff" /><path d="M4 0L0 6h3l-1 5 5-6H4z" fill="#fff" /></G>
          <Spacer $w={20} />
          <Stack $end><Fit w={36} size={15} color="#fff">19:46</Fit><Fit w={78} size={15} color="#fff">23-09-2024</Fit></Stack>
          <Spacer $w={10} />
          <G w={17} h={21}><path d="M8.500.5c4 0 6.300 2.800 6.300 6.500v5l1.700 4H.5l1.700-4V7C2.200 3.300 4.500.5 8.500.5z" fill="#99ebff" /><path d="M5.500 17.500h6a3 2.500 0 01-6 0z" fill="#99ebff" /></G>
          <Spacer $w={22} />
          <G w={30} h={30}>
            <path d="M9 1h9c2 0 3 1 3.500 3l.5 2h-5L11 19c-1 2-2 2.500-4 2.500H3c-2.500 0-3.500-1.500-2.500-4L5.500 4C6.200 2 7 1 9 1z" fill="url(#cop)" /><path d="M18 1c2 0 3 1 3.500 3l1 3.500h-6L14.500 2z" fill="#1546b8" />
            <path d="M19 8h6c2.500 0 4 1.500 3 4l-3.500 9H13l3-8 1-3c.3-1.200 1-2 2-2z" fill="url(#cop2)" />
            <rect x="7.500" y="20" width="22" height="9.500" rx="2.500" fill="#ffc40c" /><text x="10.500" y="27.700" fontFamily="Open Sans" fontWeight="700" fontSize="8" textLength="16" lengthAdjust="spacingAndGlyphs" fill="#111">PRE</text>
          </G>
          <Spacer $w={25} />
        </Tray>
      </TaskBar>
    </Window>
  );
}
